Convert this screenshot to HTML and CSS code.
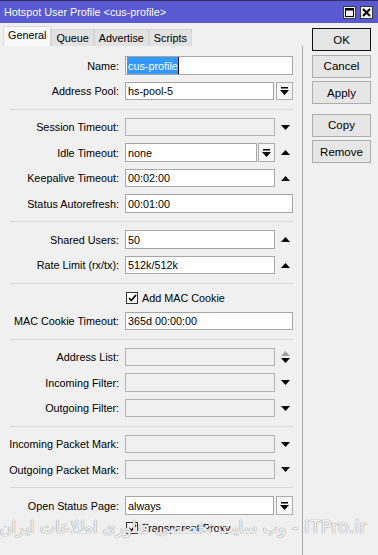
FILE: index.html
```html
<!DOCTYPE html>
<html lang="en">

<head>
  <meta charset="UTF-8">
  <meta name="viewport" content="width=device-width, initial-scale=1.0">
  <title>Hotspot User Profile</title>
  <link rel="stylesheet" href="styles.css">
</head>

<body>
  <div class="window">
    <!-- Title bar -->
    <div class="titlebar">
      <span class="title">Hotspot User Profile &lt;cus-profile&gt;</span>
      <div class="ctrls">
        <span class="ctl">
          <svg width="9" height="9" viewBox="0 0 9 9"><path d="M0 0h9v9H0z M1 2.5v5.5h7V2.5z" fill-rule="evenodd"/></svg>
        </span>
        <span class="ctl">
          <svg width="9" height="9" viewBox="0 0 9 9"><path d="M1 1l7 7M8 1L1 8" stroke="#000" stroke-width="2"/></svg>
        </span>
      </div>
    </div>

    <div class="body">
      <div class="main">
        <!-- Tabs -->
        <div class="tabs">
          <div class="tab active">General</div>
          <div class="tab">Queue</div>
          <div class="tab">Advertise</div>
          <div class="tab">Scripts</div>
        </div>

        <!-- General tab -->
        <div class="panel">
          <div class="section first">
            <div class="row">
              <span class="lbl">Name:</span>
              <div class="field"><div class="input"><span class="sel">cus-profile</span></div></div>
            </div>
            <div class="row">
              <span class="lbl">Address Pool:</span>
              <div class="field">
                <div class="input">hs-pool-5</div>
                <span class="dd"><svg width="9" height="8" viewBox="0 0 9 8"><path d="M1 0h7v1.5H1z M0 3h9L4.5 8z"/></svg></span>
              </div>
            </div>
          </div>
          <hr class="sep">

          <div class="section">
            <div class="row">
              <span class="lbl">Session Timeout:</span>
              <div class="field">
                <div class="input off"></div>
                <span class="spin"><svg width="9" height="5" viewBox="0 0 9 5"><path d="M0 0h9L4.5 5z"/></svg></span>
              </div>
            </div>
            <div class="row">
              <span class="lbl">Idle Timeout:</span>
              <div class="field">
                <div class="input">none</div>
                <span class="dd tight"><svg width="9" height="8" viewBox="0 0 9 8"><path d="M1 0h7v1.5H1z M0 3h9L4.5 8z"/></svg></span>
                <span class="spin"><svg width="9" height="5" viewBox="0 0 9 5"><path d="M4.5 0L9 5H0z"/></svg></span>
              </div>
            </div>
            <div class="row">
              <span class="lbl">Keepalive Timeout:</span>
              <div class="field">
                <div class="input">00:02:00</div>
                <span class="spin"><svg width="9" height="5" viewBox="0 0 9 5"><path d="M4.5 0L9 5H0z"/></svg></span>
              </div>
            </div>
            <div class="row">
              <span class="lbl">Status Autorefresh:</span>
              <div class="field"><div class="input">00:01:00</div></div>
            </div>
          </div>
          <hr class="sep">

          <div class="section">
            <div class="row">
              <span class="lbl">Shared Users:</span>
              <div class="field">
                <div class="input">50</div>
                <span class="spin"><svg width="9" height="5" viewBox="0 0 9 5"><path d="M4.5 0L9 5H0z"/></svg></span>
              </div>
            </div>
            <div class="row">
              <span class="lbl">Rate Limit (rx/tx):</span>
              <div class="field">
                <div class="input">512k/512k</div>
                <span class="spin"><svg width="9" height="5" viewBox="0 0 9 5"><path d="M4.5 0L9 5H0z"/></svg></span>
              </div>
            </div>
          </div>
          <hr class="sep">

          <div class="section">
            <div class="row check-row">
              <span class="box"><svg width="9" height="8" viewBox="0 0 9 8"><path d="M1 4l2.3 2.5L8 1" fill="none" stroke="#000" stroke-width="1.8"/></svg></span>
              <span>Add MAC Cookie</span>
            </div>
            <div class="row">
              <span class="lbl">MAC Cookie Timeout:</span>
              <div class="field"><div class="input">365d 00:00:00</div></div>
            </div>
          </div>
          <hr class="sep">

          <div class="section">
            <div class="row">
              <span class="lbl">Address List:</span>
              <div class="field">
                <div class="input off"></div>
                <span class="spin">
                  <svg width="9" height="5" viewBox="0 0 9 5"><path d="M4.5 0L9 5H0z" fill="#a0a0a0"/></svg>
                  <svg width="9" height="5" viewBox="0 0 9 5"><path d="M0 0h9L4.5 5z"/></svg>
                </span>
              </div>
            </div>
            <div class="row">
              <span class="lbl">Incoming Filter:</span>
              <div class="field">
                <div class="input off"></div>
                <span class="spin"><svg width="9" height="5" viewBox="0 0 9 5"><path d="M0 0h9L4.5 5z"/></svg></span>
              </div>
            </div>
            <div class="row">
              <span class="lbl">Outgoing Filter:</span>
              <div class="field">
                <div class="input off"></div>
                <span class="spin"><svg width="9" height="5" viewBox="0 0 9 5"><path d="M0 0h9L4.5 5z"/></svg></span>
              </div>
            </div>
          </div>
          <hr class="sep">

          <div class="section">
            <div class="row">
              <span class="lbl">Incoming Packet Mark:</span>
              <div class="field">
                <div class="input off"></div>
                <span class="spin"><svg width="9" height="5" viewBox="0 0 9 5"><path d="M0 0h9L4.5 5z"/></svg></span>
              </div>
            </div>
            <div class="row">
              <span class="lbl">Outgoing Packet Mark:</span>
              <div class="field">
                <div class="input off"></div>
                <span class="spin"><svg width="9" height="5" viewBox="0 0 9 5"><path d="M0 0h9L4.5 5z"/></svg></span>
              </div>
            </div>
          </div>
          <hr class="sep">

          <div class="section">
            <div class="row">
              <span class="lbl">Open Status Page:</span>
              <div class="field">
                <div class="input">always</div>
                <span class="dd"><svg width="9" height="8" viewBox="0 0 9 8"><path d="M1 0h7v1.5H1z M0 3h9L4.5 8z"/></svg></span>
              </div>
            </div>
            <div class="row check-row">
              <span class="box"><svg width="9" height="8" viewBox="0 0 9 8"><path d="M1 4l2.3 2.5L8 1" fill="none" stroke="#000" stroke-width="1.8"/></svg></span>
              <span>Transparent Proxy</span>
            </div>
          </div>
        </div>
      </div>

      <!-- Dialog buttons -->
      <div class="side">
        <div class="btn default">OK</div>
        <div class="btn">Cancel</div>
        <div class="btn">Apply</div>
        <div class="btn gap">Copy</div>
        <div class="btn">Remove</div>
      </div>
    </div>

    <!-- Watermark over the dialog -->
    <div class="watermark">
      <span class="wm-fa" dir="rtl" lang="fa">وب سایت تخصصی فناوری اطلاعات ایران</span>
      <span class="wm-en">- ITPro.ir</span>
    </div>
  </div>
</body>

</html>
```

FILE: styles.css
```css
/* Page */
body {
  margin: 0;
  background: #f0f0f0;
  font-family: "Liberation Sans", Arial, sans-serif;
  font-size: 10.8px;
  color: #000;
}

.window {
  position: relative;
  width: 378px;
  height: 555px;
  overflow: hidden;
  background: #f0f0f0;
}

/* Title bar */
.titlebar {
  height: 22px;
  border-top: 1px solid #30305a;
  background: #5959d1;
  color: #fff;
  display: flex;
  align-items: center;
  justify-content: space-between;
  padding: 0 5px 0 4px;
}

.ctrls {
  display: flex;
  gap: 4px;
}

.ctl {
  width: 11px;
  height: 11px;
  border: 1px solid #3a3a3a;
  background: #f2f2f2;
  display: flex;
  align-items: center;
  justify-content: center;
}

/* Layout */
.body {
  display: flex;
}

.main {
  width: 303px;
}

/* Tabs */
.tabs {
  height: 20px;
  padding: 3px 0 0 3px;
  display: flex;
  align-items: flex-end;
}

.tab {
  height: 16px;
  line-height: 16px;
  padding: 0 4px;
  background: #e2e2e2;
  border: 1px solid #d6d6d6;
  border-bottom: none;
}

.tab.active {
  height: 19px;
  line-height: 17px;
  background: #f8f8f8;
  border-color: #d9d9d9;
}

/* Tab panel */
.panel {
  height: 499px;
  padding: 10.25px 9px 0 0;
  border-right: 1px solid #a8a8a8;
}

.section {
  display: flex;
  flex-direction: column;
  gap: 7px;
  padding: 8.25px 0;
}

.section.first {
  padding-top: 0;
}

.sep {
  height: 1px;
  margin: 0 0 0 10px;
  border: 0;
  background: #d8d8d8;
}

.row {
  display: flex;
  align-items: center;
  height: 18.5px;
}

.lbl {
  width: 119px;
  text-align: right;
  white-space: nowrap;
}

.field {
  width: 168px;
  height: 100%;
  margin-left: 6px;
  display: flex;
}

.input {
  flex: 1;
  min-width: 0;
  display: flex;
  align-items: center;
  padding: 0 2px;
  background: #fff;
  border: 1px solid #a6a6a6;
}

.input.off {
  background: #f0f0f0;
  border-color: #b4b4b4;
}

.sel {
  background: #3399ff;
  color: #fff;
  height: 100%;
  display: flex;
  align-items: center;
  border-right: 1px solid #000;
  margin-left: -1px;
  padding-left: 1px;
}

.dd {
  width: 15px;
  margin-left: 2px;
  border: 1px solid #adadad;
  background: #f6f6f6;
  display: flex;
  align-items: center;
  justify-content: center;
}

.dd.tight {
  margin-left: 1px;
}

.spin {
  width: 18px;
  padding-left: 2px;
  box-sizing: border-box;
  display: flex;
  flex-direction: column;
  align-items: center;
  justify-content: center;
  gap: 2px;
}

/* Checkboxes */
.check-row {
  height: 13px;
  padding-left: 126px;
  gap: 4px;
}

.box {
  width: 10px;
  height: 10px;
  border: 1px solid #333;
  background: #fff;
  display: flex;
  align-items: center;
  justify-content: center;
}

/* Dialog buttons */
.side {
  padding: 5px 0 0 9px;
  display: flex;
  flex-direction: column;
  gap: 3.5px;
}

.btn {
  width: 57px;
  height: 21px;
  border: 1px solid #adadad;
  background: #e6e6e6;
  display: flex;
  align-items: center;
  justify-content: center;
  font-size: 11.5px;
}

.btn.default {
  border-color: #111;
}

.btn.gap {
  margin-top: 6px;
}

/* Watermark */
.watermark {
  position: absolute;
  left: 5px;
  top: 516px;
  width: 362px;
  display: flex;
  align-items: baseline;
  gap: 6px;
  font-family: "DejaVu Sans", sans-serif;
  white-space: nowrap;
  color: #f6f6f6;
  text-shadow: 0 0 1px #8c8c8c, 0 0 1px #8c8c8c;
}

.wm-fa {
  flex: 1;
  min-width: 0;
  font-size: 16.5px;
  text-align: justify;
  text-align-last: justify;
}

.wm-en {
  flex-shrink: 0;
  font-size: 18px;
}
```
